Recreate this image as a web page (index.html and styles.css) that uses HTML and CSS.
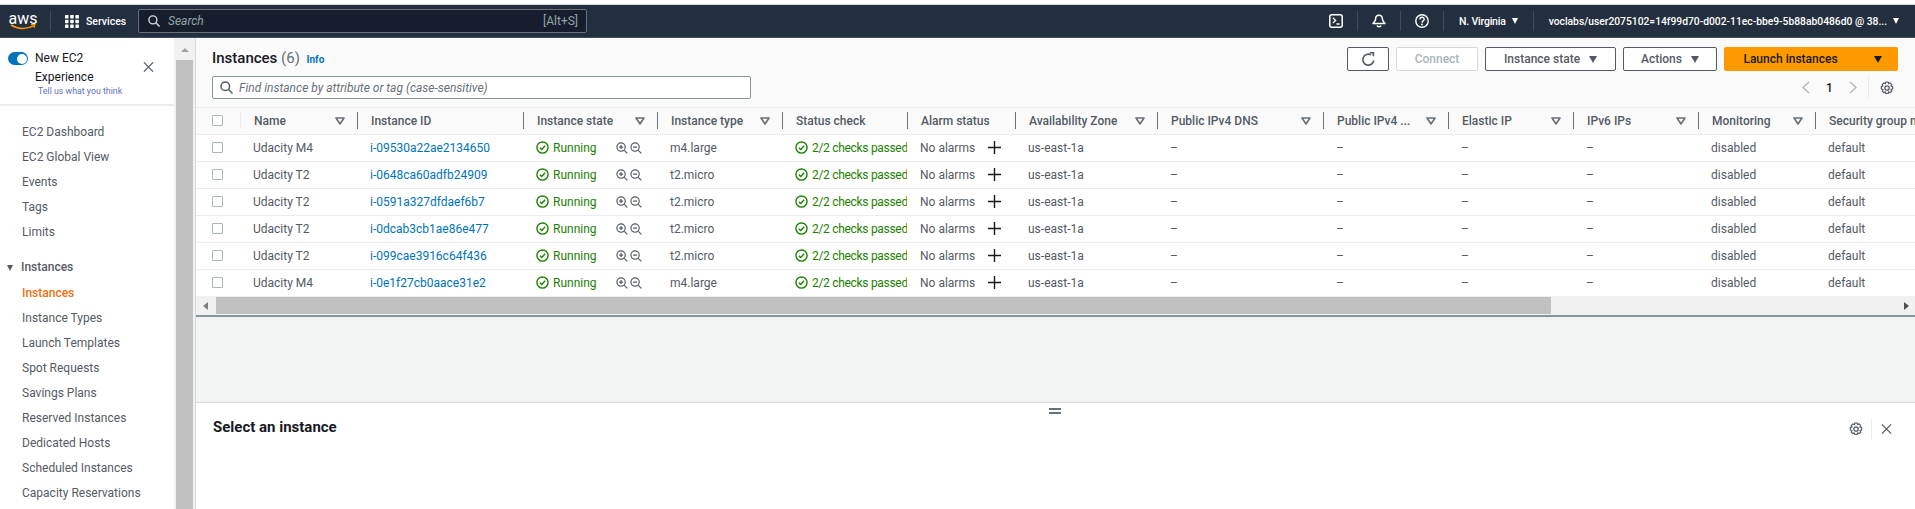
FILE: index.html
```html
<!doctype html>
<html lang="en">
  <head>
    <meta charset="UTF-8" />
    <title>Instances | EC2 Management Console</title>
    <link rel="stylesheet" href="styles.css">
  </head>
  <body>
    <svg class="sprite" aria-hidden="true">
      <symbol id="i-filter" viewBox="0 0 10 8"><path d="M1 1h8L5 7z" fill="none" stroke="#687078" stroke-width="1.6" stroke-linejoin="round"/></symbol>
      <symbol id="i-ok" viewBox="0 0 14 14"><circle cx="7" cy="7" r="6" fill="none" stroke="#1d8102" stroke-width="1.5"/><path d="M4.2 7.2l2 2 3.6-4" fill="none" stroke="#1d8102" stroke-width="1.5"/></symbol>
      <symbol id="i-in" viewBox="0 0 13 13"><circle cx="5.5" cy="5.5" r="4.5" fill="none" stroke="#545b64" stroke-width="1.3"/><path d="M9 9l3.3 3.3M3.3 5.5h4.4M5.5 3.3v4.4" fill="none" stroke="#545b64" stroke-width="1.3"/></symbol>
      <symbol id="i-out" viewBox="0 0 13 13"><circle cx="5.5" cy="5.5" r="4.5" fill="none" stroke="#545b64" stroke-width="1.3"/><path d="M9 9l3.3 3.3M3.3 5.5h4.4" fill="none" stroke="#545b64" stroke-width="1.3"/></symbol>
      <symbol id="i-plus" viewBox="0 0 13 13"><path d="M6.5 0v13M0 6.5h13" fill="none" stroke="#16191f" stroke-width="1.4"/></symbol>
      <symbol id="i-gear" viewBox="0 0 14 14"><circle cx="7" cy="7" r="2.2" fill="none" stroke="#545b64" stroke-width="1.3"/><path d="M5.8 1h2.4l.4 1.7 1.5-.8 1.7 1.7-.9 1.4 1.7.6v2.4l-1.7.5.9 1.5-1.7 1.7-1.5-.9-.4 1.7H5.8l-.5-1.7-1.4.9-1.7-1.7.8-1.5L1.3 8V5.6l1.7-.6-.8-1.4 1.7-1.7 1.4.8z" fill="none" stroke="#545b64" stroke-width="1.2" stroke-linejoin="round"/></symbol>
      <symbol id="i-close" viewBox="0 0 12 12"><path d="M1 1l10 10M11 1L1 11" fill="none" stroke="#545b64" stroke-width="1.4"/></symbol>
      <symbol id="i-search" viewBox="0 0 13 13"><circle cx="5.3" cy="5.3" r="4.3" fill="none" stroke="currentColor" stroke-width="1.5"/><path d="M8.5 8.5l4 4" fill="none" stroke="currentColor" stroke-width="1.5"/></symbol>
    </svg>

    <div class="top-strip"></div>

    <nav class="navbar">
      <div class="aws-logo">
        <span>aws</span>
        <svg width="26" height="6" viewBox="0 0 26 6"><path d="M1 1c7 4.500 16 4.500 23 .6" fill="none" stroke="#f90" stroke-width="1.5"/><path d="M21 .6l4-.4-1 3.600" fill="none" stroke="#f90" stroke-width="1.200"/></svg>
      </div>
      <div class="nav-sep sep-logo"></div>
      <div class="services">
        <svg width="14" height="13" viewBox="0 0 14 13" fill="#fff"><rect width="3.500" height="3.500" rx=".6"/><rect x="5.200" width="3.500" height="3.500" rx=".6"/><rect x="10.400" width="3.500" height="3.500" rx=".6"/><rect y="4.700" width="3.500" height="3.500" rx=".6"/><rect x="5.200" y="4.700" width="3.500" height="3.500" rx=".6"/><rect x="10.400" y="4.700" width="3.500" height="3.500" rx=".6"/><rect y="9.400" width="3.500" height="3.500" rx=".6"/><rect x="5.200" y="9.400" width="3.500" height="3.500" rx=".6"/><rect x="10.400" y="9.400" width="3.500" height="3.500" rx=".6"/></svg>
        <span>Services</span>
      </div>
      <div class="nav-search">
        <svg class="nav-search-icon" width="12" height="12"><use href="#i-search"/></svg>
        <span class="nav-search-text">Search</span>
        <span class="nav-search-key">[Alt+S]</span>
      </div>
      <div class="nav-right">
        <svg class="nav-icon" width="14" height="14" viewBox="0 0 14 14"><rect x=".8" y=".8" width="12.400" height="12.400" rx="2" fill="none" stroke="#fff" stroke-width="1.500"/><path d="M3.800 3.800l2.800 2.600-2.800 2.600M7.500 10h3" fill="none" stroke="#fff" stroke-width="1.300"/></svg>
        <div class="nav-sep"></div>
        <svg class="nav-icon" width="14" height="14" viewBox="0 0 14 14"><path d="M7 1.200c2.300 0 3.400 1.800 3.400 3.800 0 2 1 3 2.600 4.500H1c1.600-1.500 2.600-2.500 2.600-4.500S4.700 1.200 7 1.200zM5 11.500c.3 1.600 3.700 1.600 4 0" fill="none" stroke="#fff" stroke-width="1.500" stroke-linejoin="round"/></svg>
        <div class="nav-sep"></div>
        <svg class="nav-icon" width="14" height="14" viewBox="0 0 14 14"><circle cx="7" cy="7" r="6.200" fill="none" stroke="#fff" stroke-width="1.400"/><path d="M4.900 5.400c0-2.800 4.300-2.800 4.300-.2 0 1.700-2.200 1.600-2.200 3.500" fill="none" stroke="#fff" stroke-width="1.400"/><circle cx="7" cy="10.400" r=".9" fill="#fff"/></svg>
        <div class="nav-sep"></div>
        <span class="nav-region">N. Virginia</span>
        <span class="caret-white"></span>
        <div class="nav-sep sep-user"></div>
        <span class="nav-user">voclabs/user2075102=14f99d70-d002-11ec-bbe9-5b88ab0486d0 @ 38...</span>
        <span class="caret-white"></span>
      </div>
    </nav>

    <div class="layout">
      <aside class="sidebar">
        <div class="side-head">
          <span class="toggle"></span>
          <div class="side-head-text">
            <div>New EC2</div>
            <div>Experience</div>
            <div class="side-feedback">Tell us what you think</div>
          </div>
          <svg class="side-close" width="11" height="12"><use href="#i-close"/></svg>
        </div>
        <ul class="side-nav">
          <li>EC2 Dashboard</li>
          <li>EC2 Global View</li>
          <li>Events</li>
          <li>Tags</li>
          <li>Limits</li>
          <li class="side-group"><span class="caret-dark"></span>Instances</li>
          <li class="active">Instances</li>
          <li>Instance Types</li>
          <li>Launch Templates</li>
          <li>Spot Requests</li>
          <li>Savings Plans</li>
          <li>Reserved Instances</li>
          <li>Dedicated Hosts</li>
          <li>Scheduled Instances</li>
          <li>Capacity Reservations</li>
        </ul>
      </aside>

      <div class="side-scroll">
        <span class="scroll-up"></span>
        <div class="side-thumb"></div>
      </div>

      <main class="main">
        <section class="instances">
          <div class="bar-top">
            <h1>Instances <span class="count">(6)</span> <a class="info">Info</a></h1>
            <div class="actions">
              <button class="btn btn-refresh">
                <svg width="15" height="15" viewBox="0 0 15 15"><path d="M12.800 8.500A5.500 5.500 0 1 1 10 2.800" fill="none" stroke="#545b64" stroke-width="1.600"/><path d="M8.800 0.600h3.600v3.700" fill="none" stroke="#545b64" stroke-width="1.600"/></svg>
              </button>
              <button class="btn btn-connect" disabled>Connect</button>
              <button class="btn btn-state">Instance state<span class="caret-btn"></span></button>
              <button class="btn btn-actions">Actions<span class="caret-btn"></span></button>
              <div class="launch">
                <span class="launch-main">Launch instances</span>
                <span class="launch-drop"><span class="caret-launch"></span></span>
              </div>
            </div>
          </div>
          <div class="bar-filter">
            <div class="filter-input">
              <svg width="13" height="13"><use href="#i-search"/></svg>
              <span>Find instance by attribute or tag (case-sensitive)</span>
            </div>
            <div class="pager">
              <svg width="8" height="13" viewBox="0 0 8 13"><path d="M7 1L1 6.500 7 12" fill="none" stroke="#aab7b8" stroke-width="1.300"/></svg>
              <span class="page-num">1</span>
              <svg width="8" height="13" viewBox="0 0 8 13"><path d="M1 1l6 5.500L1 12" fill="none" stroke="#aab7b8" stroke-width="1.300"/></svg>
              <span class="pager-sep"></span>
              <svg width="14" height="14"><use href="#i-gear"/></svg>
            </div>
          </div>
        </section>

        <div class="table-wrap">
          <table>
            <thead>
              <tr>
                <th class="col-check"><div class="cell-check"><span class="checkbox"></span></div></th>
                <th class="col-name"><div class="th-in">Name<svg class="filter"><use href="#i-filter"/></svg></div></th>
                <th class="col-id"><div class="th-in">Instance ID</div></th>
                <th class="col-state"><div class="th-in">Instance state<svg class="filter"><use href="#i-filter"/></svg></div></th>
                <th class="col-type"><div class="th-in">Instance type<svg class="filter"><use href="#i-filter"/></svg></div></th>
                <th class="col-status"><div class="th-in">Status check</div></th>
                <th class="col-alarm"><div class="th-in">Alarm status</div></th>
                <th class="col-az"><div class="th-in">Availability Zone<svg class="filter"><use href="#i-filter"/></svg></div></th>
                <th class="col-dns"><div class="th-in">Public IPv4 DNS<svg class="filter"><use href="#i-filter"/></svg></div></th>
                <th class="col-ip"><div class="th-in">Public IPv4 ...<svg class="filter"><use href="#i-filter"/></svg></div></th>
                <th class="col-eip"><div class="th-in">Elastic IP<svg class="filter"><use href="#i-filter"/></svg></div></th>
                <th class="col-v6"><div class="th-in">IPv6 IPs<svg class="filter"><use href="#i-filter"/></svg></div></th>
                <th class="col-mon"><div class="th-in">Monitoring<svg class="filter"><use href="#i-filter"/></svg></div></th>
                <th class="col-sg"><div class="th-in">Security group name</div></th>
              </tr>
            </thead>
            <tbody>
              <tr>
                <td><div class="cell-check"><span class="checkbox"></span></div></td>
                <td>Udacity M4</td>
                <td><a>i-09530a22ae2134650</a></td>
                <td><div class="state"><svg width="13" height="13"><use href="#i-ok"/></svg><span class="green">Running</span><svg class="zoom-in" width="12" height="12"><use href="#i-in"/></svg><svg width="12" height="12"><use href="#i-out"/></svg></div></td>
                <td>m4.large</td>
                <td><div class="status"><svg width="13" height="13"><use href="#i-ok"/></svg><span class="green">2/2 checks passed</span></div></td>
                <td><div class="alarm">No alarms<svg width="13" height="13"><use href="#i-plus"/></svg></div></td>
                <td>us-east-1a</td>
                <td>–</td><td>–</td><td>–</td><td>–</td>
                <td>disabled</td>
                <td>default</td>
              </tr>
              <tr>
                <td><div class="cell-check"><span class="checkbox"></span></div></td>
                <td>Udacity T2</td>
                <td><a>i-0648ca60adfb24909</a></td>
                <td><div class="state"><svg width="13" height="13"><use href="#i-ok"/></svg><span class="green">Running</span><svg class="zoom-in" width="12" height="12"><use href="#i-in"/></svg><svg width="12" height="12"><use href="#i-out"/></svg></div></td>
                <td>t2.micro</td>
                <td><div class="status"><svg width="13" height="13"><use href="#i-ok"/></svg><span class="green">2/2 checks passed</span></div></td>
                <td><div class="alarm">No alarms<svg width="13" height="13"><use href="#i-plus"/></svg></div></td>
                <td>us-east-1a</td>
                <td>–</td><td>–</td><td>–</td><td>–</td>
                <td>disabled</td>
                <td>default</td>
              </tr>
              <tr>
                <td><div class="cell-check"><span class="checkbox"></span></div></td>
                <td>Udacity T2</td>
                <td><a>i-0591a327dfdaef6b7</a></td>
                <td><div class="state"><svg width="13" height="13"><use href="#i-ok"/></svg><span class="green">Running</span><svg class="zoom-in" width="12" height="12"><use href="#i-in"/></svg><svg width="12" height="12"><use href="#i-out"/></svg></div></td>
                <td>t2.micro</td>
                <td><div class="status"><svg width="13" height="13"><use href="#i-ok"/></svg><span class="green">2/2 checks passed</span></div></td>
                <td><div class="alarm">No alarms<svg width="13" height="13"><use href="#i-plus"/></svg></div></td>
                <td>us-east-1a</td>
                <td>–</td><td>–</td><td>–</td><td>–</td>
                <td>disabled</td>
                <td>default</td>
              </tr>
              <tr>
                <td><div class="cell-check"><span class="checkbox"></span></div></td>
                <td>Udacity T2</td>
                <td><a>i-0dcab3cb1ae86e477</a></td>
                <td><div class="state"><svg width="13" height="13"><use href="#i-ok"/></svg><span class="green">Running</span><svg class="zoom-in" width="12" height="12"><use href="#i-in"/></svg><svg width="12" height="12"><use href="#i-out"/></svg></div></td>
                <td>t2.micro</td>
                <td><div class="status"><svg width="13" height="13"><use href="#i-ok"/></svg><span class="green">2/2 checks passed</span></div></td>
                <td><div class="alarm">No alarms<svg width="13" height="13"><use href="#i-plus"/></svg></div></td>
                <td>us-east-1a</td>
                <td>–</td><td>–</td><td>–</td><td>–</td>
                <td>disabled</td>
                <td>default</td>
              </tr>
              <tr>
                <td><div class="cell-check"><span class="checkbox"></span></div></td>
                <td>Udacity T2</td>
                <td><a>i-099cae3916c64f436</a></td>
                <td><div class="state"><svg width="13" height="13"><use href="#i-ok"/></svg><span class="green">Running</span><svg class="zoom-in" width="12" height="12"><use href="#i-in"/></svg><svg width="12" height="12"><use href="#i-out"/></svg></div></td>
                <td>t2.micro</td>
                <td><div class="status"><svg width="13" height="13"><use href="#i-ok"/></svg><span class="green">2/2 checks passed</span></div></td>
                <td><div class="alarm">No alarms<svg width="13" height="13"><use href="#i-plus"/></svg></div></td>
                <td>us-east-1a</td>
                <td>–</td><td>–</td><td>–</td><td>–</td>
                <td>disabled</td>
                <td>default</td>
              </tr>
              <tr>
                <td><div class="cell-check"><span class="checkbox"></span></div></td>
                <td>Udacity M4</td>
                <td><a>i-0e1f27cb0aace31e2</a></td>
                <td><div class="state"><svg width="13" height="13"><use href="#i-ok"/></svg><span class="green">Running</span><svg class="zoom-in" width="12" height="12"><use href="#i-in"/></svg><svg width="12" height="12"><use href="#i-out"/></svg></div></td>
                <td>m4.large</td>
                <td><div class="status"><svg width="13" height="13"><use href="#i-ok"/></svg><span class="green">2/2 checks passed</span></div></td>
                <td><div class="alarm">No alarms<svg width="13" height="13"><use href="#i-plus"/></svg></div></td>
                <td>us-east-1a</td>
                <td>–</td><td>–</td><td>–</td><td>–</td>
                <td>disabled</td>
                <td>default</td>
              </tr>
            </tbody>
          </table>
        </div>

        <div class="h-scroll">
          <span class="scroll-left"></span>
          <div class="h-thumb"></div>
          <span class="scroll-right"></span>
        </div>

        <div class="gap-area"></div>

        <section class="split">
          <span class="split-handle"></span>
          <h2>Select an instance</h2>
          <div class="split-tools">
            <svg width="14" height="14"><use href="#i-gear"/></svg>
            <span class="split-sep"></span>
            <svg width="11" height="12"><use href="#i-close"/></svg>
          </div>
        </section>
      </main>
    </div>
  </body>
</html>
```
FILE: styles.css
```css
* {
  box-sizing: border-box;
}
html,
body {
  height: 100%;
}
body {
  font-family: Roboto, "Liberation Sans", sans-serif;
  font-size: 12px;
  margin: 0;
  color: #545b64;
  background: #fff;
  overflow: hidden;
  display: flex;
  flex-direction: column;
}
.sprite {
  display: none;
}
svg {
  flex: none;
  display: block;
}

/* top bar */
.top-strip {
  height: 5px;
  flex: none;
  background: #fff;
  border-bottom: 1px solid #d5dbdb;
}
.navbar {
  height: 33px;
  flex: none;
  background: #232f3e;
  border-bottom: 1px solid #414d5c;
  color: #fff;
  display: flex;
  align-items: center;
  padding-left: 10px;
}
.aws-logo {
  width: 26px;
  display: flex;
  flex-direction: column;
  align-items: center;
}
.aws-logo span {
  font-size: 16px;
  line-height: 11px;
}
.nav-sep {
  width: 1px;
  height: 20px;
  background: #414d5c;
  flex: none;
}
.sep-logo {
  margin-left: 14px;
}
.services {
  display: flex;
  align-items: center;
  gap: 7px;
  margin-left: 14px;
  width: 73px;
  font-size: 10.500px;
  font-weight: 500;
}
.nav-search {
  width: 449px;
  height: 24px;
  background: #161e2d;
  border: 1px solid #687078;
  border-radius: 2px;
  display: flex;
  align-items: center;
  padding: 0 8px 0 9px;
  color: #d5dbdb;
}
.nav-search-text {
  margin-left: 8px;
  font-style: italic;
  color: #95a5a6;
}
.nav-search-key {
  margin-left: auto;
  color: #95a5a6;
}
.nav-right {
  margin-left: auto;
  display: flex;
  align-items: center;
  padding-right: 16px;
  font-size: 11px;
}
.nav-icon {
  margin: 0 14px;
}
.nav-region {
  margin-left: 15px;
  font-size: 10.500px;
  font-weight: 500;
  letter-spacing: -0.2px;
}
.caret-white {
  border-left: 3.5px solid transparent;
  border-right: 3.5px solid transparent;
  border-top: 6px solid #fff;
  margin-left: 6px;
}
.sep-user {
  margin: 0 15px;
}
.nav-user {
  font-size: 10.300px;
  font-weight: 500;
  white-space: nowrap;
}

/* page layout */
.layout {
  flex: 1;
  display: flex;
  min-height: 0;
}
.sidebar {
  width: 174px;
  flex: none;
  overflow: hidden;
}
.side-head {
  height: 68px;
  border-bottom: 2px solid #eaeded;
  display: flex;
  padding: 14px 0 0 8px;
}
.toggle {
  width: 20px;
  height: 13px;
  border-radius: 7px;
  background: #0073bb;
  position: relative;
  flex: none;
  margin-top: 0;
}
.toggle::after {
  content: "";
  position: absolute;
  right: 1.500px;
  top: 1.500px;
  width: 10px;
  height: 10px;
  border-radius: 50%;
  background: #fff;
}
.side-head-text {
  margin-left: 7px;
  line-height: 19px;
  color: #16191f;
  margin-top: -3px;
  width: 108px;
}
.side-feedback {
  font-size: 8.800px;
  line-height: 11px;
  color: #5f6fc4;
  margin-left: 3px;
  margin-top: -1px;
}
.side-close {
  margin-top: 9px;
}
.side-nav {
  list-style: none;
  margin: 0;
  padding: 14px 0 0 22px;
}
.side-nav li {
  height: 25px;
  line-height: 25px;
  white-space: nowrap;
}
.side-nav .side-group {
  margin: 10px 0 1px -15px;
  display: flex;
  align-items: center;
  gap: 8px;
  font-weight: 500;
  color: #545b64;
}
.side-nav .active {
  color: #ec7211;
  font-weight: 500;
}
.caret-dark {
  border-left: 3.500px solid transparent;
  border-right: 3.500px solid transparent;
  border-top: 6px solid #545b64;
}
.side-scroll {
  width: 22px;
  flex: none;
  background: #f1f1f1;
  border-right: 1px solid #d5dbdb;
  padding: 0 2px;
  display: flex;
  flex-direction: column;
  align-items: center;
}
.scroll-up {
  margin-top: 10px;
  border-left: 4px solid transparent;
  border-right: 4px solid transparent;
  border-bottom: 4px solid #a3a3a3;
}
.side-thumb {
  margin-top: 8px;
  width: 17px;
  flex: 1;
  background: #c1c1c1;
}

/* instances panel */
.main {
  flex: 1;
  min-width: 0;
  display: flex;
  flex-direction: column;
  background: #f2f3f3;
}
.instances {
  height: 70px;
  flex: none;
  background: #fafafa;
  padding: 9px 17px 0 16px;
  border-bottom: 1px solid #eaeded;
}
.bar-top {
  display: flex;
  justify-content: space-between;
  align-items: center;
  height: 24px;
}
h1 {
  margin: 0;
  font-size: 15px;
  font-weight: 500;
  color: #16191f;
  white-space: nowrap;
  margin-top: -2px;
}
.count {
  font-weight: 400;
  color: #687078;
}
.info {
  font-size: 10px;
  font-weight: 700;
  color: #0073bb;
  margin-left: 3px;
}
.actions {
  display: flex;
  gap: 7px;
}
.btn {
  height: 24px;
  font-family: inherit;
  font-size: 12px;
  font-weight: 500;
  color: #545b64;
  background: #fff;
  border: 1px solid #545b64;
  border-radius: 2px;
  padding: 0;
  display: flex;
  align-items: center;
  justify-content: center;
}
.btn-refresh {
  width: 42px;
}
.btn-connect {
  width: 82px;
  color: #aab7b8;
  border-color: #d5dbdb;
}
.btn-state {
  width: 131px;
}
.btn-actions {
  width: 94px;
}
.caret-btn {
  border-left: 4.500px solid transparent;
  border-right: 4.500px solid transparent;
  border-top: 7px solid #545b64;
  margin-left: 9px;
}
.launch {
  width: 174px;
  height: 24px;
  background: #f90;
  border-radius: 2px;
  display: flex;
  align-items: center;
  font-weight: 500;
  color: #16191f;
}
.launch-main {
  width: 133px;
  text-align: center;
}
.launch-drop {
  flex: 1;
  display: flex;
  justify-content: center;
}
.caret-launch {
  border-left: 4.500px solid transparent;
  border-right: 4.500px solid transparent;
  border-top: 7px solid #16191f;
}
.bar-filter {
  display: flex;
  align-items: center;
  justify-content: space-between;
  margin-top: 5px;
  padding-right: 4px;
}
.filter-input {
  width: 539px;
  height: 23px;
  background: #fff;
  border: 1px solid #879596;
  border-radius: 2px;
  display: flex;
  align-items: center;
  gap: 6px;
  padding: 0 7px;
  color: #545b64;
}
.filter-input span {
  font-style: italic;
  color: #687078;
}
.pager {
  display: flex;
  align-items: center;
  height: 23px;
}
.page-num {
  width: 39px;
  text-align: center;
  font-weight: 500;
  color: #16191f;
}
.pager-sep {
  width: 1px;
  height: 23px;
  background: #eaeded;
  margin: 0 11px 0 11px;
}

/* table */
.table-wrap {
  flex: none;
  overflow: hidden;
  background: #fff;
}
table {
  table-layout: fixed;
  width: 1792px;
  border-collapse: collapse;
}
th {
  height: 26px;
  padding: 0;
  background: #fafafa;
  border-bottom: 1px solid #eaeded;
  text-align: left;
  font-weight: 500;
  color: #545b64;
  white-space: nowrap;
}
td {
  height: 27px;
  padding: 0 0 0 13px;
  border-bottom: 1px solid #eaeded;
  white-space: nowrap;
  overflow: hidden;
}
tbody tr:last-child td {
  border-bottom: none;
}
td:first-child {
  padding: 0;
}
.col-check { width: 44px; }
.col-name { width: 117px; }
.col-id { width: 166px; }
.col-state { width: 134px; }
.col-type { width: 125px; }
.col-status { width: 125px; }
.col-alarm { width: 108px; }
.col-az { width: 142px; }
.col-dns { width: 166px; }
.col-ip { width: 125px; }
.col-eip { width: 125px; }
.col-v6 { width: 125px; }
.col-mon { width: 117px; }
.col-sg { width: 173px; }
.th-in {
  height: 17px;
  border-left: 1px solid #687078;
  padding: 0 12px 0 13px;
  display: flex;
  align-items: center;
  justify-content: space-between;
  overflow: hidden;
}
.col-name .th-in {
  border-left: 1px solid #eaeded;
}
.filter {
  width: 10px;
  height: 8px;
}
.cell-check {
  padding-left: 16px;
  display: flex;
  align-items: center;
}
.checkbox {
  width: 11px;
  height: 11px;
  border: 1px solid #aab7b8;
  border-radius: 1px;
  background: #fff;
}
a {
  color: #0073bb;
}
.green {
  color: #1d8102;
}
.state,
.status {
  display: flex;
  align-items: center;
  gap: 4px;
}
.status .green {
  letter-spacing: -0.3px;
}
.state .zoom-in {
  margin: 0 -2px 0 15px;
}
.alarm {
  display: flex;
  align-items: center;
  gap: 13px;
}
.h-scroll {
  height: 21px;
  flex: none;
  background: #f1f1f1;
  border-bottom: 2px solid #879596;
  display: flex;
  align-items: center;
  padding: 0 6px 0 7px;
}
.scroll-left {
  border-top: 4px solid transparent;
  border-bottom: 4px solid transparent;
  border-right: 5px solid #7f7f7f;
}
.h-thumb {
  width: 1335px;
  height: 17px;
  background: #c1c1c1;
  margin-left: 8px;
}
.scroll-right {
  margin-left: auto;
  border-top: 4px solid transparent;
  border-bottom: 4px solid transparent;
  border-left: 5px solid #505050;
}
.gap-area {
  height: 85px;
  flex: none;
}

/* split panel */
.split {
  flex: 1;
  background: #fff;
  border-top: 1px solid #d5dbdb;
  position: relative;
  display: flex;
  align-items: flex-start;
  justify-content: space-between;
  padding: 16px 23px 0 17px;
}
.split-handle {
  position: absolute;
  left: 853px;
  top: 5px;
  width: 12px;
  height: 6px;
  border-top: 2px solid #687078;
  border-bottom: 2px solid #687078;
}
h2 {
  margin: 0;
  font-size: 15px;
  line-height: 17px;
  font-weight: 700;
  color: #16191f;
}
.split-tools {
  display: flex;
  align-items: center;
}
.split-sep {
  width: 1px;
  height: 20px;
  background: #eaeded;
  margin: 0 9px 0 8px;
}
```
